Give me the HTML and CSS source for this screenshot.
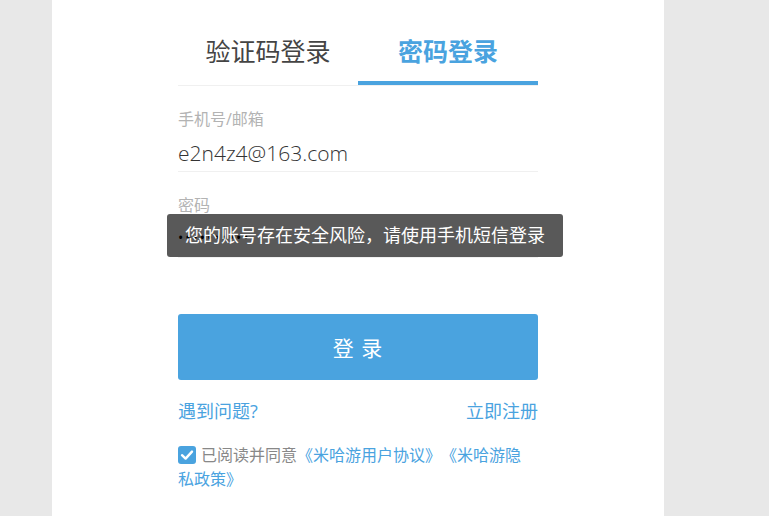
FILE: index.html
```html
<!DOCTYPE html>
<html lang="zh-CN">
<head>
    <meta charset="UTF-8">
    <meta name="viewport" content="width=device-width, initial-scale=1.0">
    <title>登录</title>
    <link rel="stylesheet" href="styles.css">
</head>
<body>
    <div class="panel">
        <div class="login-form">
            <!-- Tabs -->
            <div class="tabs">
                <div class="tab">验证码登录</div>
                <div class="tab tab-active">密码登录</div>
            </div>

            <div class="field">
                <label class="field-label">手机号/邮箱</label>
                <div class="field-input">e2n4z4@163.com</div>
            </div>

            <div class="field">
                <label class="field-label">密码</label>
                <div class="field-input field-password">••••••••••</div>
            </div>

            <!-- Toast over the password field -->
            <div class="toast">您的账号存在安全风险，请使用手机短信登录</div>

            <button class="login-button">登 录</button>

            <div class="link-row">
                <a class="link">遇到问题?</a>
                <a class="link">立即注册</a>
            </div>

            <div class="agreement">
                <span class="checkbox">
                    <svg width="18" height="18" viewBox="0 0 18 18">
                        <rect x="0" y="0" width="18" height="18" rx="3" fill="#4aa3df"/>
                        <path d="M4 9.2 L7.6 12.6 L14 5.6" fill="none" stroke="#fff" stroke-width="2.4" stroke-linecap="round" stroke-linejoin="round"/>
                    </svg>
                </span><span class="agreement-text">已阅读并同意</span><a class="link">《米哈游用户协议》</a><a class="link">《米哈游隐私政策》</a>
            </div>
        </div>
    </div>
</body>
</html>
```

FILE: styles.css
```css
body {
    margin: 0;
    background-color: #e8e8e8;
    font-family: "Open Sans", "Noto Sans CJK SC", sans-serif;
    color: #333;
}
.panel {
    margin-left: 52px;
    width: 612px;
    min-height: 516px;
    background-color: #fff;
}
.login-form {
    position: relative;
    width: 360px;
    margin: 0 auto;
}

/* Tabs */
.tabs {
    display: flex;
    border-bottom: 1px solid #f0f0f0;
}
.tab {
    flex: 1;
    height: 81px;
    line-height: 102px;
    text-align: center;
    font-size: 25px;
    color: #444;
    border-bottom: 4px solid transparent;
}
.tab-active {
    color: #4aa3df;
    font-weight: bold;
    border-bottom-color: #4aa3df;
}

/* Fields */
.field {
    padding-top: 21px;
    border-bottom: 1px solid #f0f0f0;
}
.field-label {
    display: block;
    font-size: 16px;
    line-height: 24px;
    color: #b3b3b3;
}
.field-input {
    margin-top: 4px;
    height: 36px;
    line-height: 36px;
    font-size: 21px;
    font-weight: 300;
    color: #333;
}
.field-password {
    font-size: 14px;
    font-weight: 400;
    color: #000;
    letter-spacing: 2px;
    line-height: 34px;
}

.toast {
    position: absolute;
    left: -11px;
    top: 214px;
    width: 396px;
    height: 43px;
    line-height: 43px;
    border-radius: 3px;
    background-color: rgba(0, 0, 0, 0.65);
    color: #fff;
    font-size: 18px;
    text-align: center;
}

.login-button {
    display: block;
    width: 100%;
    height: 66px;
    margin-top: 56px;
    border: none;
    border-radius: 3px;
    background-color: #4aa3df;
    color: #fff;
    font-family: inherit;
    font-size: 21px;
    letter-spacing: 1px;
    cursor: pointer;
}

.link-row {
    display: flex;
    justify-content: space-between;
    margin-top: 19px;
    line-height: 24px;
    font-size: 18px;
}
.link {
    color: #4aa3df;
    text-decoration: none;
    cursor: pointer;
}

.agreement {
    margin-top: 20px;
    padding-right: 12px;
    font-size: 16px;
    line-height: 24px;
    color: #888;
    text-spacing-trim: space-all;
}
.agreement-text {
    margin-left: 5px;
}
.checkbox {
    display: inline-block;
    width: 18px;
    height: 18px;
    vertical-align: -3px;
}
.checkbox svg {
    display: block;
}
```
